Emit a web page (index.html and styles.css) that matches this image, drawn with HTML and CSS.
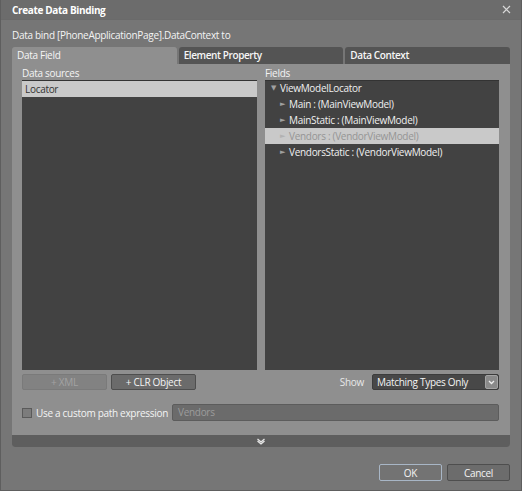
FILE: index.html
```html
<!DOCTYPE html>
<html>
<head>
<meta charset="utf-8">
<link rel="stylesheet" href="styles.css">
</head>
<body>
<div class="window">
  <div class="titlebar">
    <span class="title">Create Data Binding</span>
    <svg class="close" width="9" height="9" viewBox="0 0 9 9"><path d="M1 1 L8 8 M8 1 L1 8" stroke="#d8d8d8" stroke-width="1.2" fill="none"/></svg>
  </div>
  <div class="caption">Data bind [PhoneApplicationPage].DataContext to</div>
  <div class="tabs">
    <div class="tab active">Data Field</div>
    <div class="tab">Element Property</div>
    <div class="tab">Data Context</div>
  </div>
  <div class="panel">
    <div class="columns">
      <div class="col">
        <div class="label">Data sources</div>
        <div class="list">
          <div class="row selected">Locator</div>
        </div>
        <div class="toolbar">
          <button class="btn disabled">+ XML</button>
          <button class="btn">+ CLR Object</button>
        </div>
      </div>
      <div class="col">
        <div class="label">Fields</div>
        <div class="list">
          <div class="row"><span class="arrow down">&#9660;</span>ViewModelLocator</div>
          <div class="row child"><span class="arrow">&#9658;</span>Main : (MainViewModel)</div>
          <div class="row child"><span class="arrow">&#9658;</span>MainStatic : (MainViewModel)</div>
          <div class="row child selected grey"><span class="arrow">&#9658;</span>Vendors : (VendorViewModel)</div>
          <div class="row child"><span class="arrow">&#9658;</span>VendorsStatic : (VendorViewModel)</div>
        </div>
        <div class="toolbar right">
          <span class="show">Show</span>
          <div class="combo">
            <span>Matching Types Only</span>
            <span class="drop"><svg width="7" height="5" viewBox="0 0 7 5"><path d="M1 1 L3.5 3.5 L6 1" stroke="#eee" stroke-width="1.3" fill="none"/></svg></span>
          </div>
        </div>
      </div>
    </div>
    <div class="pathrow">
      <span class="check"></span>
      <span class="pathlabel">Use a custom path expression</span>
      <div class="pathinput">Vendors</div>
    </div>
    <div class="expander">
      <svg width="10" height="7" viewBox="0 0 10 7"><path d="M1.5 1 L5 4 L8.5 1 M1.5 3 L5 6 L8.5 3" stroke="#e6e6e6" stroke-width="1.3" fill="none"/></svg>
    </div>
  </div>
  <div class="actions">
    <button class="btn2 ok">OK</button>
    <button class="btn2">Cancel</button>
  </div>
</div>
</body>
</html>
```

FILE: styles.css
```css
* { box-sizing: border-box; }
html, body { margin: 0; padding: 0; }
body {
  width: 522px;
  height: 491px;
  background: #757575;
  font-family: "Open Sans", "DejaVu Sans", sans-serif;
  font-size: 10px;
  letter-spacing: -0.3px;
  color: #f0f0f0;
  overflow: hidden;
}
.window {
  width: 522px;
  height: 491px;
  border: 1px solid #5e5e5e;
  border-top: none;
  background: #767676;
  display: flex;
  flex-direction: column;
}
.titlebar {
  height: 20px;
  background: #6c6c6c;
  border-bottom: 1px solid #6a6a6a;
  display: flex;
  align-items: center;
  justify-content: space-between;
  padding: 0 10px 0 11px;
}
.title { font-weight: bold; font-size: 10px; letter-spacing: -0.35px; color: #ffffff; }
.caption {
  margin: 8px 0 0 11px;
  height: 14px;
  line-height: 14px;
  color: #f4f4f4;
}
.tabs {
  display: flex;
  gap: 2px;
  margin: 5px 11px 0 11px;
  height: 17px;
}
.tab {
  flex: 1;
  background: #545454;
  border-radius: 3px 3px 0 0;
  padding-left: 5px;
  line-height: 17px;
  color: #f6f6f6;
  font-weight: 600;
  letter-spacing: -0.4px;
}
.tab.active { background: #8f8f8f; font-weight: normal; letter-spacing: -0.3px; }
.panel {
  margin: 0 11px 0 11px;
  background: #8f8f8f;
  padding: 3px 0 0 0;
  border-radius: 0 0 3px 3px;
  display: flex;
  flex-direction: column;
}
.columns {
  display: grid;
  grid-template-columns: 235px 234px;
  gap: 8px;
  padding: 0 11px 0 10px;
}
.col { display: flex; flex-direction: column; }
.label { height: 13px; line-height: 13px; color: #f4f4f4; }
.list {
  height: 290px;
  background: #424242;
  border-top: 1px solid #333;
}
.row {
  height: 16px;
  line-height: 16px;
  padding-left: 3px;
  color: #f0f0f0;
  white-space: nowrap;
  display: flex;
  align-items: center;
}
.col:last-child .list .row:first-child { margin-top: -1px; }
.col:last-child .row { padding-left: 6px; }
.col:last-child .row.child { padding-left: 15px; }
.row.selected { background: #c9c9c9; color: #333; }
.row.grey { color: #959595; }
.arrow { font-size: 7px; color: #a0a0a0; width: 9px; display: inline-block; }
.row.grey .arrow { color: #b2b2b2; }
.toolbar {
  display: flex;
  gap: 4px;
  margin-top: 4px;
  height: 16px;
}
.toolbar.right { justify-content: flex-end; align-items: center; }
.btn {
  width: 85px;
  height: 16px;
  padding: 0;
  font: inherit;
  letter-spacing: inherit;
  border-radius: 2px;
  background: #6b6b6b;
  border: 1px solid #4e4e4e;
  color: #f4f4f4;
}
.btn.disabled { background: #828282; border-color: #7a7a7a; color: #a2a2a2; }
.show { color: #e8e8e8; margin-right: 4px; }
.combo {
  width: 127px;
  height: 16px;
  background: #484848;
  border: 1px solid #3c3c3c;
  border-radius: 2px;
  display: flex;
  align-items: center;
  justify-content: space-between;
  padding-left: 4px;
  color: #f4f4f4;
}
.drop {
  width: 13px;
  height: 14px;
  background: #8a8a8a;
  border: 1px solid #a4a4a4;
  border-radius: 2px;
  display: flex;
  align-items: center;
  justify-content: center;
}
.pathrow {
  display: flex;
  align-items: center;
  margin-top: 14px;
  padding: 0 11px 0 10px;
  height: 17px;
}
.check {
  width: 10px;
  height: 10px;
  border: 1px solid #5a5a5a;
  background: #7c7c7c;
  margin-right: 4px;
}
.pathlabel { color: #f4f4f4; margin-right: 4px; }
.pathinput {
  flex: 1;
  height: 17px;
  background: #6b6b6b;
  border: 1px solid #5c5c5c;
  border-radius: 2px;
  padding-left: 5px;
  line-height: 15px;
  color: #9c9c9c;
}
.expander {
  margin-top: 14px;
  height: 12px;
  background: #5e5e5e;
  border-radius: 0 0 3px 3px;
  display: flex;
  justify-content: center;
  align-items: center;
}
.actions {
  display: flex;
  justify-content: flex-end;
  gap: 5px;
  margin: 17px 11px 0 0;
}
.btn2 {
  width: 63px;
  height: 17px;
  padding: 0;
  font: inherit;
  letter-spacing: inherit;
  border-radius: 2px;
  background: #6c6c6c;
  border: 1px solid #4e4e4e;
  color: #f4f4f4;
}
.btn2.ok { background: #737373; border-color: #a8b6c6; }
```
